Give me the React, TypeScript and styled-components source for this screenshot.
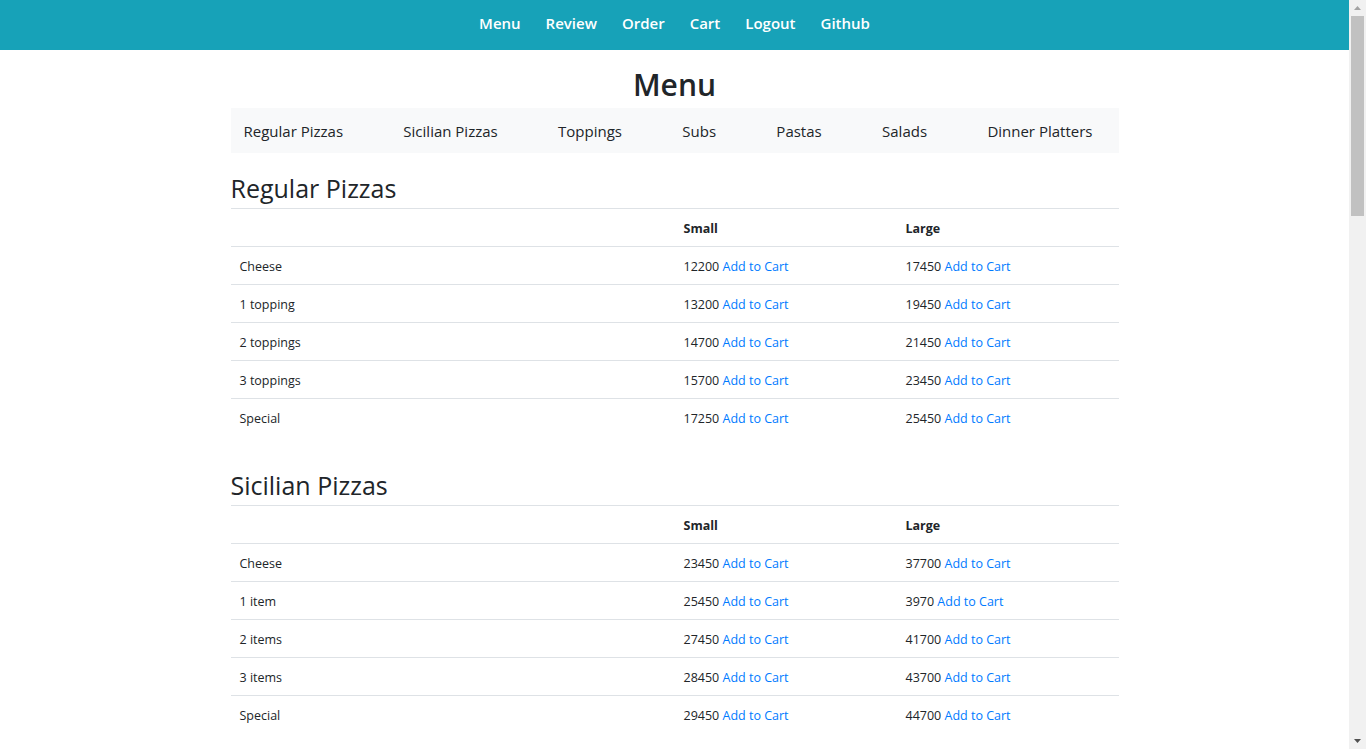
import React from "react";
import styled, { createGlobalStyle } from "styled-components";

const FONT = `"Open Sans", "Noto Sans", "Liberation Sans", sans-serif`;

const GlobalStyle = createGlobalStyle`
  html, body { margin: 0; padding: 0; background: #fff; }
  body { font-family: ${FONT}; color: #212529; margin-right: 17px; }
  * { box-sizing: border-box; }
`;

/* imitation of the browser's classic scrollbar, lying over the page edge */
const ScrollRail = styled.div`
  position: fixed;
  top: 0;
  right: 0;
  width: 17px;
  height: 100vh;
  background: #f1f1f1;
  display: flex;
  flex-direction: column;
  align-items: center;
  z-index: 10;
`;

const RailButton = styled.div<{ $end?: boolean }>`
  height: 16px;
  width: 100%;
  display: flex;
  justify-content: center;
  align-items: center;
  margin-top: ${(p) => (p.$end ? "auto" : "0")};
`;

const Thumb = styled.div`
  width: 13px;
  height: 200px;
  background: #c1c1c1;
`;

const NavBar = styled.nav`
  height: 50px;
  background: #17a2b8;
  display: flex;
  justify-content: center;
  align-items: center;
  gap: 25px;
  padding-bottom: 4px;
`;

const NavLink = styled.a`
  color: #fff;
  font-weight: 600;
  font-size: 15px;
  text-decoration: none;
  cursor: pointer;
`;

const Container = styled.main`
  width: 888px;
  margin: 0 auto;
  padding-bottom: 560px;
`;

const Title = styled.h1`
  margin: 16px 0 4px;
  font-size: 30px;
  line-height: 38px;
  font-weight: 600;
  text-align: center;
`;

const TabBar = styled.div`
  height: 45px;
  background: #f8f9fa;
  display: flex;
  align-items: center;
  justify-content: space-between;
  padding: 0 26px 0 13px;
`;

const Tab = styled.a`
  font-size: 15px;
  color: #212529;
  text-decoration: none;
  cursor: pointer;
`;

const Section = styled.section`
  display: flow-root;
`;

const SectionTitle = styled.h3`
  margin: 20px 0 4px;
  font-size: 25px;
  line-height: 31px;
  font-weight: 500;
`;

const Table = styled.table`
  width: 100%;
  border-collapse: collapse;
  margin-bottom: 14px;
  font-size: 12.5px;
  line-height: 19px;
`;

const Cell = styled.td<{ $w?: string }>`
  border-top: 1px solid #dee2e6;
  padding: 10px 9px 8px;
  text-align: left;
  vertical-align: top;
  width: ${(p) => p.$w || "auto"};
`;

const HeadCell = styled(Cell).attrs({ as: "th" })`
  font-weight: 700;
`;

const Link = styled.a`
  color: #007bff;
  text-decoration: none;
  cursor: pointer;
`;

type Row = [string, string, string];

const sections: { title: string; rows: Row[] }[] = [
  {
    title: "Regular Pizzas",
    rows: [
      ["Cheese", "12200", "17450"],
      ["1 topping", "13200", "19450"],
      ["2 toppings", "14700", "21450"],
      ["3 toppings", "15700", "23450"],
      ["Special", "17250", "25450"],
    ],
  },
  {
    title: "Sicilian Pizzas",
    rows: [
      ["Cheese", "23450", "37700"],
      ["1 item", "25450", "3970"],
      ["2 items", "27450", "41700"],
      ["3 items", "28450", "43700"],
      ["Special", "29450", "44700"],
    ],
  },
  {
    title: "Toppings",
    rows: [
      "Pepperoni", "Sausage", "Mushrooms", "Onions", "Ham", "Canadian Bacon",
      "Pineapple", "Eggplant", "Tomato & Basil", "Green Peppers", "Hamburger",
      "Spinach", "Artichoke", "Buffalo Chicken", "Barbecue Chicken", "Anchovies",
      "Black Olives", "Fresh Garlic", "Zucchini",
    ].map((t) => [t, "", ""] as Row),
  },
  {
    title: "Subs",
    rows: [
      ["Cheese", "6500", "7950"],
      ["Italian", "6500", "7950"],
      ["Ham + Cheese", "6500", "7950"],
      ["Meatball", "6500", "7950"],
      ["Tuna", "6500", "7950"],
      ["Turkey", "7500", "8500"],
      ["Chicken Parmigiana", "7500", "8500"],
      ["Eggplant Parmigiana", "6500", "7950"],
      ["Steak", "6500", "7950"],
      ["Steak + Cheese", "6950", "8500"],
      ["Sausage, Peppers & Onions", "", "8500"],
      ["Hamburger", "4600", "6950"],
      ["Cheeseburger", "5100", "7450"],
      ["Fried Chicken", "6950", "8500"],
      ["Veggie", "6950", "8500"],
    ],
  },
  {
    title: "Pastas",
    rows: [
      ["Baked Ziti w/Mozzarella", "6500", ""],
      ["Baked Ziti w/Meatballs", "8750", ""],
      ["Baked Ziti w/Chicken", "9750", ""],
    ],
  },
  {
    title: "Salads",
    rows: [
      ["Garden Salad", "6250", ""],
      ["Greek Salad", "8250", ""],
      ["Antipasto", "8250", ""],
      ["Salad w/Tuna", "8250", ""],
    ],
  },
  {
    title: "Dinner Platters",
    rows: [
      ["Garden Salad", "4000", "6500"],
      ["Greek Salad", "5000", "8000"],
      ["Antipasto", "5000", "8000"],
      ["Baked Ziti", "4000", "6500"],
      ["Meatball Parm", "5000", "8000"],
      ["Chicken Parm", "5000", "8000"],
    ],
  },
];

const Price = ({ value }: { value: string }) =>
  value ? (
    <>
      {value} <Link>Add to Cart</Link>
    </>
  ) : null;

export default function App() {
  return (
    <>
      <GlobalStyle />
      <ScrollRail aria-hidden="true">
        <RailButton>
          <svg width="7" height="4" viewBox="0 0 7 4">
            <path d="M3.5 0 L7 4 L0 4 Z" fill="#a3a3a3" />
          </svg>
        </RailButton>
        <Thumb />
        <RailButton $end>
          <svg width="7" height="4" viewBox="0 0 7 4">
            <path d="M0 0 L7 0 L3.5 4 Z" fill="#505050" />
          </svg>
        </RailButton>
      </ScrollRail>
      <NavBar>
        {["Menu", "Review", "Order", "Cart", "Logout", "Github"].map((l) => (
          <NavLink key={l}>{l}</NavLink>
        ))}
      </NavBar>
      <Container>
        <Title>Menu</Title>
        <TabBar>
          {sections.map((s) => (
            <Tab key={s.title}>{s.title}</Tab>
          ))}
        </TabBar>
        {sections.map((s) => (
          <Section key={s.title}>
            <SectionTitle>{s.title}</SectionTitle>
            <Table>
              <thead>
                <tr>
                  <HeadCell $w="50%"></HeadCell>
                  <HeadCell $w="25%">Small</HeadCell>
                  <HeadCell $w="25%">Large</HeadCell>
                </tr>
              </thead>
              <tbody>
                {s.rows.map((r, i) => (
                  <tr key={i}>
                    <Cell>{r[0]}</Cell>
                    <Cell>
                      <Price value={r[1]} />
                    </Cell>
                    <Cell>
                      <Price value={r[2]} />
                    </Cell>
                  </tr>
                ))}
              </tbody>
            </Table>
          </Section>
        ))}
      </Container>
    </>
  );
}
